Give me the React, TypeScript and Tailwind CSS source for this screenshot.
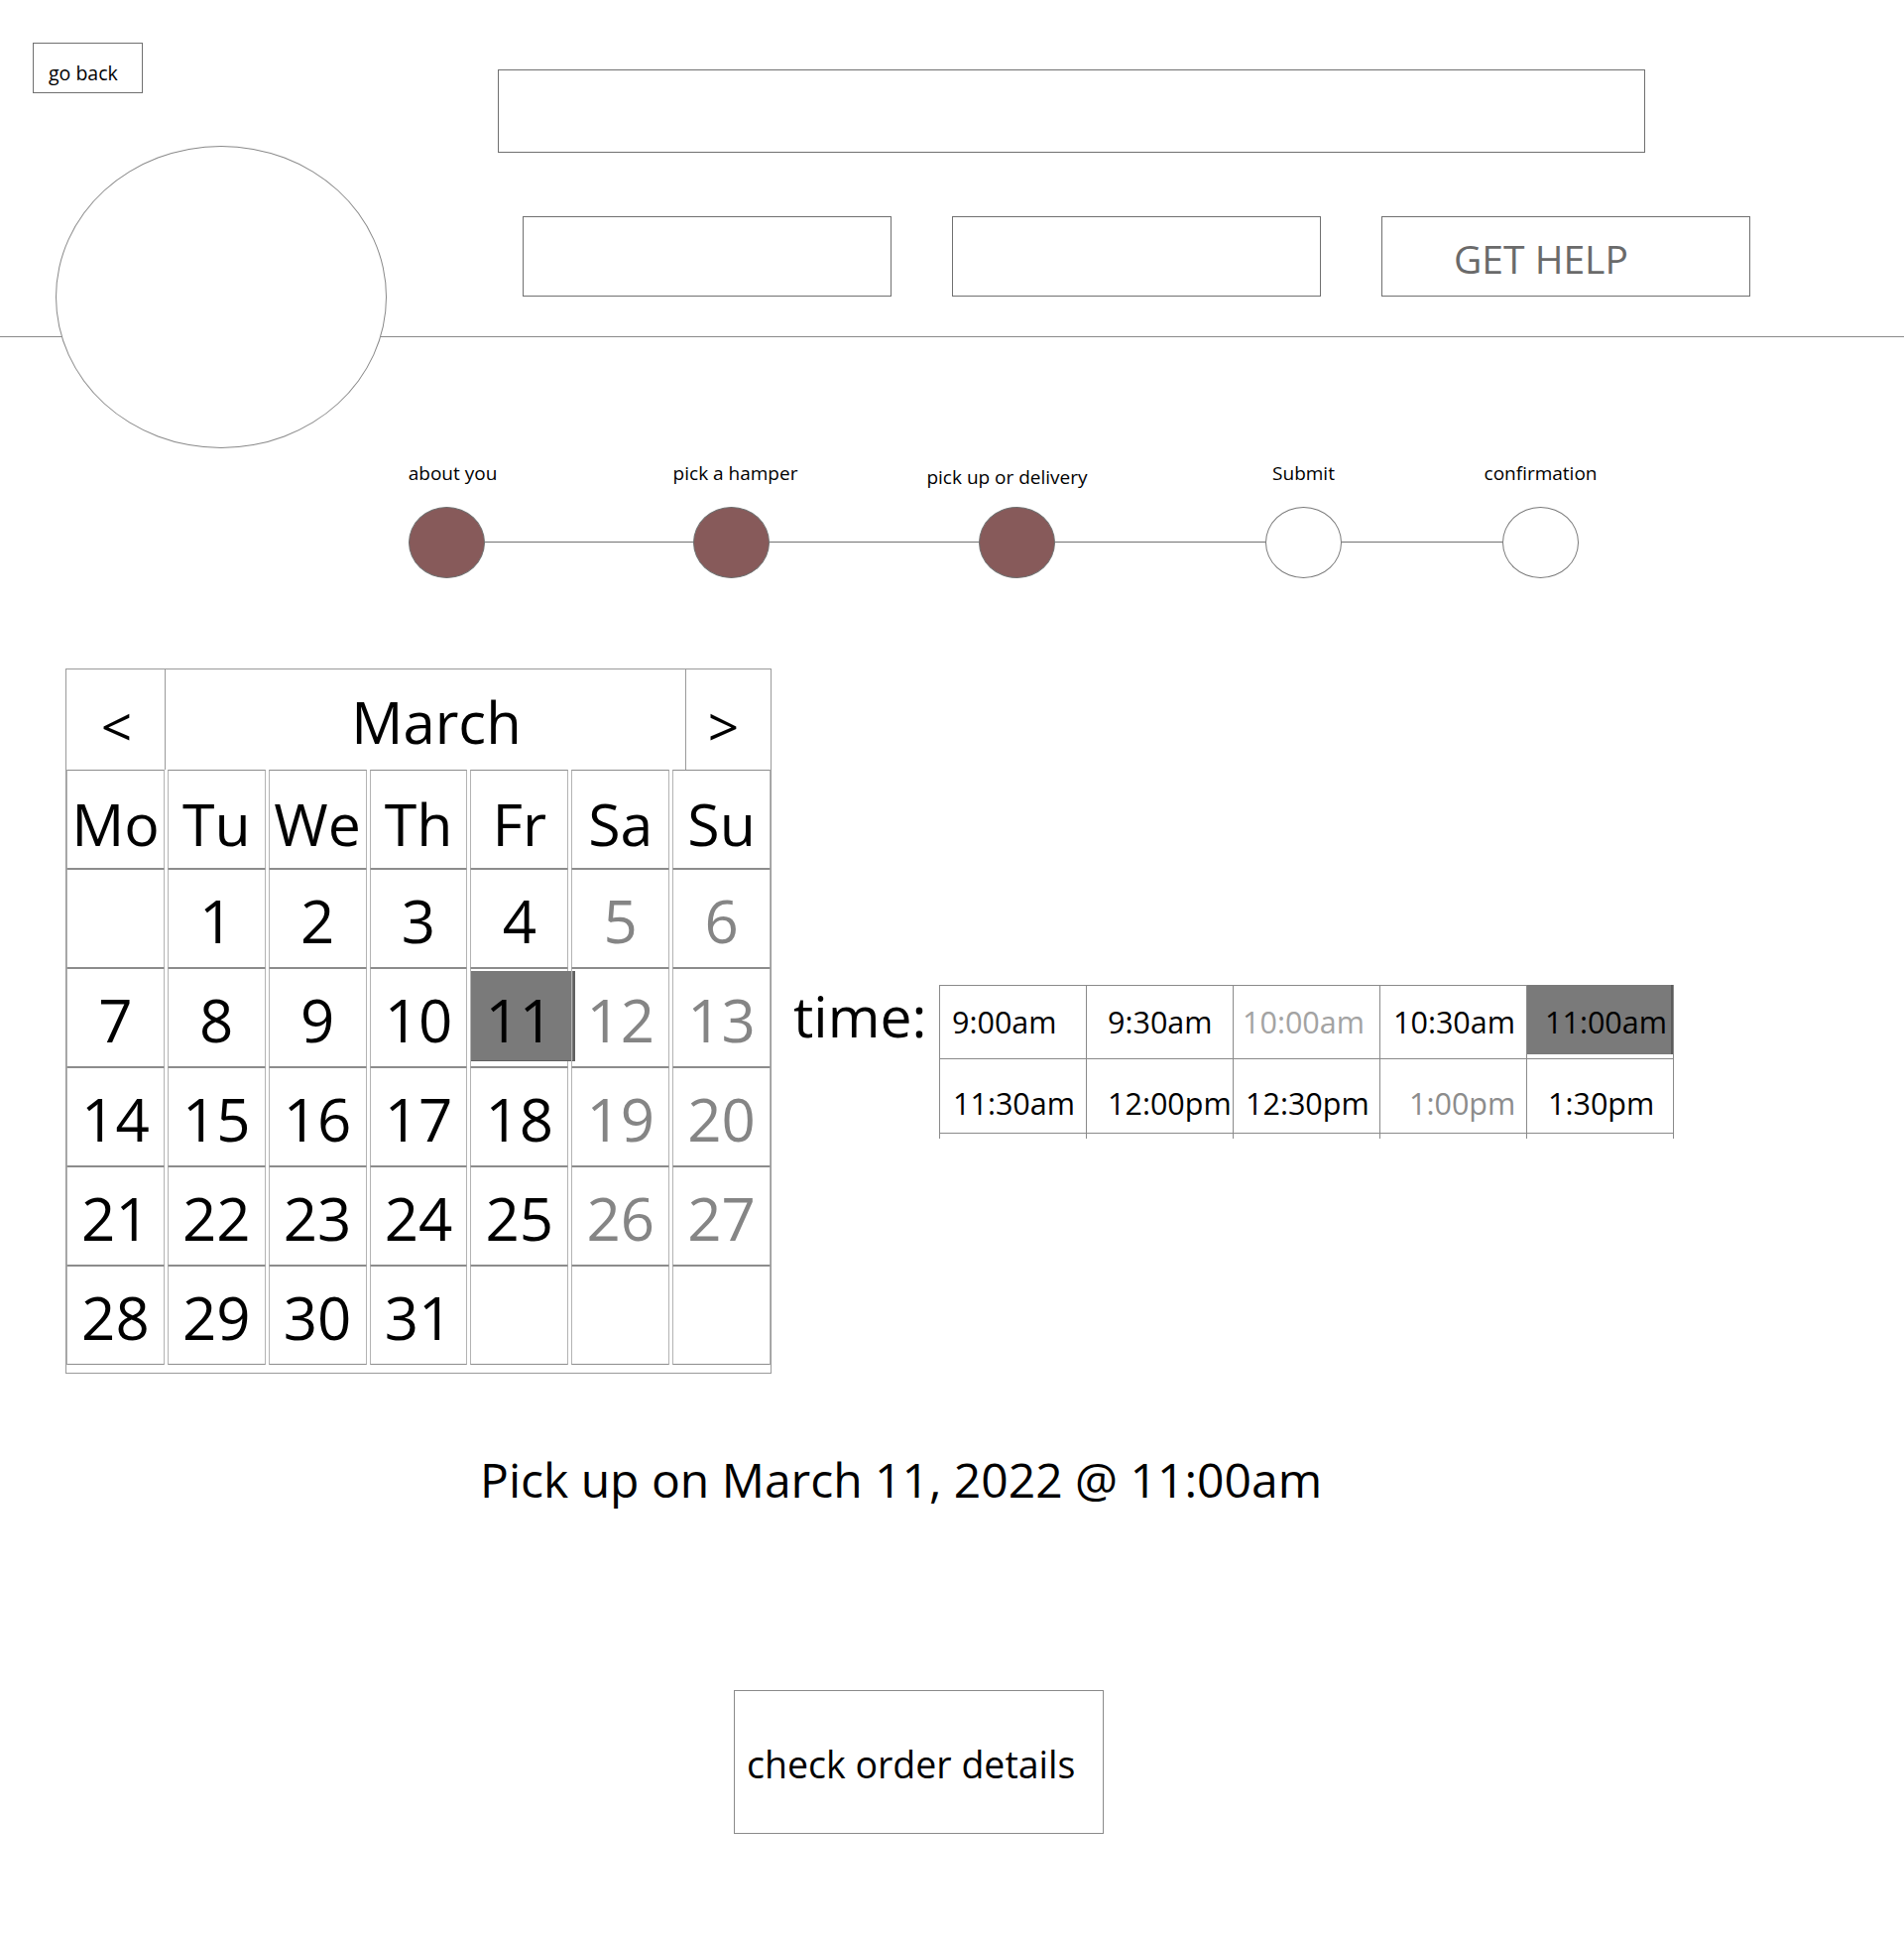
import React from "react";

type Step = { label: string; done: boolean; shift: string };

const steps: Step[] = [
  { label: "about you", done: true, shift: "mb-[4px] translate-x-[6px]" },
  { label: "pick a hamper", done: true, shift: "mb-[4px] translate-x-[4px]" },
  { label: "pick up or delivery", done: true, shift: "mt-[4px] -translate-x-[10px]" },
  { label: "Submit", done: false, shift: "mb-[4px]" },
  { label: "confirmation", done: false, shift: "mb-[4px]" },
];

// gaps between the step dots
const connectors = ["w-[210px]", "w-[211px]", "w-[212px]", "w-[162px]"];

const weekDays = ["Mo", "Tu", "We", "Th", "Fr", "Sa", "Su"];

const weeks: (number | null)[][] = [
  [null, 1, 2, 3, 4, 5, 6],
  [7, 8, 9, 10, 11, 12, 13],
  [14, 15, 16, 17, 18, 19, 20],
  [21, 22, 23, 24, 25, 26, 27],
  [28, 29, 30, 31, null, null, null],
];

type Slot = { time: string; pad: string; tone?: string; selected?: boolean };

const slots: Slot[][] = [
  [
    { time: "9:00am", pad: "pl-[12px]" },
    { time: "9:30am", pad: "pl-[21px]" },
    { time: "10:00am", pad: "pl-[9px]", tone: "text-[#a3a3a3]" },
    { time: "10:30am", pad: "pl-[13px]" },
    { time: "11:00am", pad: "pl-[18px]", selected: true },
  ],
  [
    { time: "11:30am", pad: "pl-[13px]" },
    { time: "12:00pm", pad: "pl-[21px]" },
    { time: "12:30pm", pad: "pl-[12px]" },
    { time: "1:00pm", pad: "pl-[29px]", tone: "text-[#8c8c8c]" },
    { time: "1:30pm", pad: "pl-[21px]" },
  ],
];

function Header() {
  return (
    <header className="flex h-[340px] border-b border-[#8a8a8a]">
      <div className="w-[502px] pl-[33px] pt-[43px]">
        <button
          type="button"
          className="flex h-[51px] w-[111px] items-start border border-[#707070] pl-[15px] pt-[20px] text-[19.5px] leading-none text-black"
        >
          go back
        </button>
        <div className="ml-[23px] mt-[53px] h-[305px] w-[334px] rounded-[50%] border border-[#8a8a8a] bg-white" />
      </div>
      <div className="pt-[70px]">
        <div className="h-[84px] w-[1157px] border border-[#707070]" />
        <div className="ml-[25px] mt-[64px] flex gap-[61px]">
          <div className="h-[81px] w-[372px] border border-[#707070]" />
          <div className="h-[81px] w-[372px] border border-[#707070]" />
          <button
            type="button"
            className="flex h-[81px] w-[372px] items-start border border-[#707070] pl-[72px] pt-[22px] text-[39px] leading-none text-[#6a6a6a]"
          >
            GET HELP
          </button>
        </div>
      </div>
    </header>
  );
}

function Stepper() {
  return (
    <div className="flex items-end pl-[412px] pt-[126px]">
      {steps.map((s, i) => (
        <React.Fragment key={s.label}>
          <div className="flex w-[77px] flex-col items-center">
            <span className={`whitespace-nowrap text-[19px] leading-[22px] text-black ${s.shift}`}>
              {s.label}
            </span>
            <div
              className={
                s.done
                  ? "mt-[19px] h-[72px] w-[77px] rounded-[50%] border border-[#6e6e6e] bg-[#875a5a]"
                  : "mt-[19px] h-[72px] w-[77px] rounded-[50%] border border-[#7a7a7a] bg-white"
              }
            />
          </div>
          {i < connectors.length && (
            <div className={`mb-[36px] h-px bg-[#737373] ${connectors[i]}`} />
          )}
        </React.Fragment>
      ))}
    </div>
  );
}

function Calendar() {
  return (
    <div className="w-[712px] border border-[#9a9a9a] pb-[8px] text-black">
      <div className="flex h-[101px]">
        <div className="flex w-[100px] items-center justify-center border-r border-[#9a9a9a] pl-[2px] pt-[12px] text-[55px] leading-none">
          &lt;
        </div>
        <div className="flex flex-1 items-center justify-center pl-[22px] pt-[4px] text-[58px] leading-none">
          March
        </div>
        <div className="flex w-[86px] items-center justify-center border-l border-[#9a9a9a] pr-[10px] pt-[12px] text-[55px] leading-none">
          &gt;
        </div>
      </div>
      <div className="grid grid-cols-7 gap-x-[3px]">
        {weekDays.map((d) => (
          <div
            key={d}
            className="flex h-[100px] items-center justify-center border border-x-[#b3b3b3] border-y-[#8c8c8c] pt-[8px] text-[59px] leading-none"
          >
            {d}
          </div>
        ))}
        {weeks.flat().map((n, i) => {
          const weekend = i % 7 >= 5;
          return (
            <div
              key={i}
              className="relative flex h-[100px] items-center justify-center border border-x-[#b3b3b3] border-y-[#8c8c8c] pt-[4px] text-[60px] leading-none"
            >
              {n === 11 && (
                <div className="absolute left-0 top-[2px] h-[91px] w-[105px] border-b border-r-2 border-[#5f5f5f] bg-[#7a7a7a]" />
              )}
              {n !== null && (
                <span className={weekend ? "relative text-[#858585]" : "relative text-black"}>{n}</span>
              )}
            </div>
          );
        })}
      </div>
    </div>
  );
}

function TimePicker() {
  return (
    <div className="ml-[22px] mt-[319px] flex items-start">
      <div className="w-[147px] pt-[3px] text-[57px] leading-none text-black">time:</div>
      <div className="w-[741px]">
        {slots.map((row, ri) => (
          <div
            key={ri}
            className={
              ri === 0
                ? "grid grid-cols-5 border-l border-t border-[#8a8a8a]"
                : "grid grid-cols-5 border-l border-[#8a8a8a]"
            }
          >
            {row.map((s) => (
              <div
                key={s.time}
                className={
                  ri === 0
                    ? `relative flex h-[74px] border-b border-r border-[#8a8a8a] pt-[21px] text-[30.5px] leading-none ${s.pad}`
                    : `relative flex h-[75px] border-b border-r border-[#8a8a8a] pt-[29px] text-[30.5px] leading-none ${s.pad}`
                }
              >
                {s.selected && (
                  <div className="absolute -top-px left-0 h-[70px] w-full border-r-2 border-[#5c5c5c] bg-[#7a7a7a]" />
                )}
                <span className={`relative whitespace-nowrap ${s.tone ?? "text-black"}`}>{s.time}</span>
              </div>
            ))}
          </div>
        ))}
        <div className="grid h-[5px] grid-cols-5 border-l border-[#8a8a8a]">
          {[0, 1, 2, 3, 4].map((i) => (
            <div key={i} className="border-r border-[#8a8a8a]" />
          ))}
        </div>
      </div>
    </div>
  );
}

export default function App() {
  return (
    <div className="min-h-[1958px] w-[1920px] overflow-hidden bg-white font-['Open_Sans',sans-serif] text-black">
      <Header />
      <Stepper />
      <div className="mt-[91px] flex items-start pl-[66px]">
        <Calendar />
        <TimePicker />
      </div>
      <p className="mt-[78px] pl-[484px] text-[48px] leading-[58px] text-black">
        Pick up on March 11, 2022 @ 11:00am
      </p>
      <button
        type="button"
        className="ml-[740px] mt-[183px] flex h-[145px] w-[373px] items-center border border-[#8a8a8a] pl-[12px] pt-[4px] text-[37.5px] leading-none text-black"
      >
        check order details
      </button>
    </div>
  );
}
